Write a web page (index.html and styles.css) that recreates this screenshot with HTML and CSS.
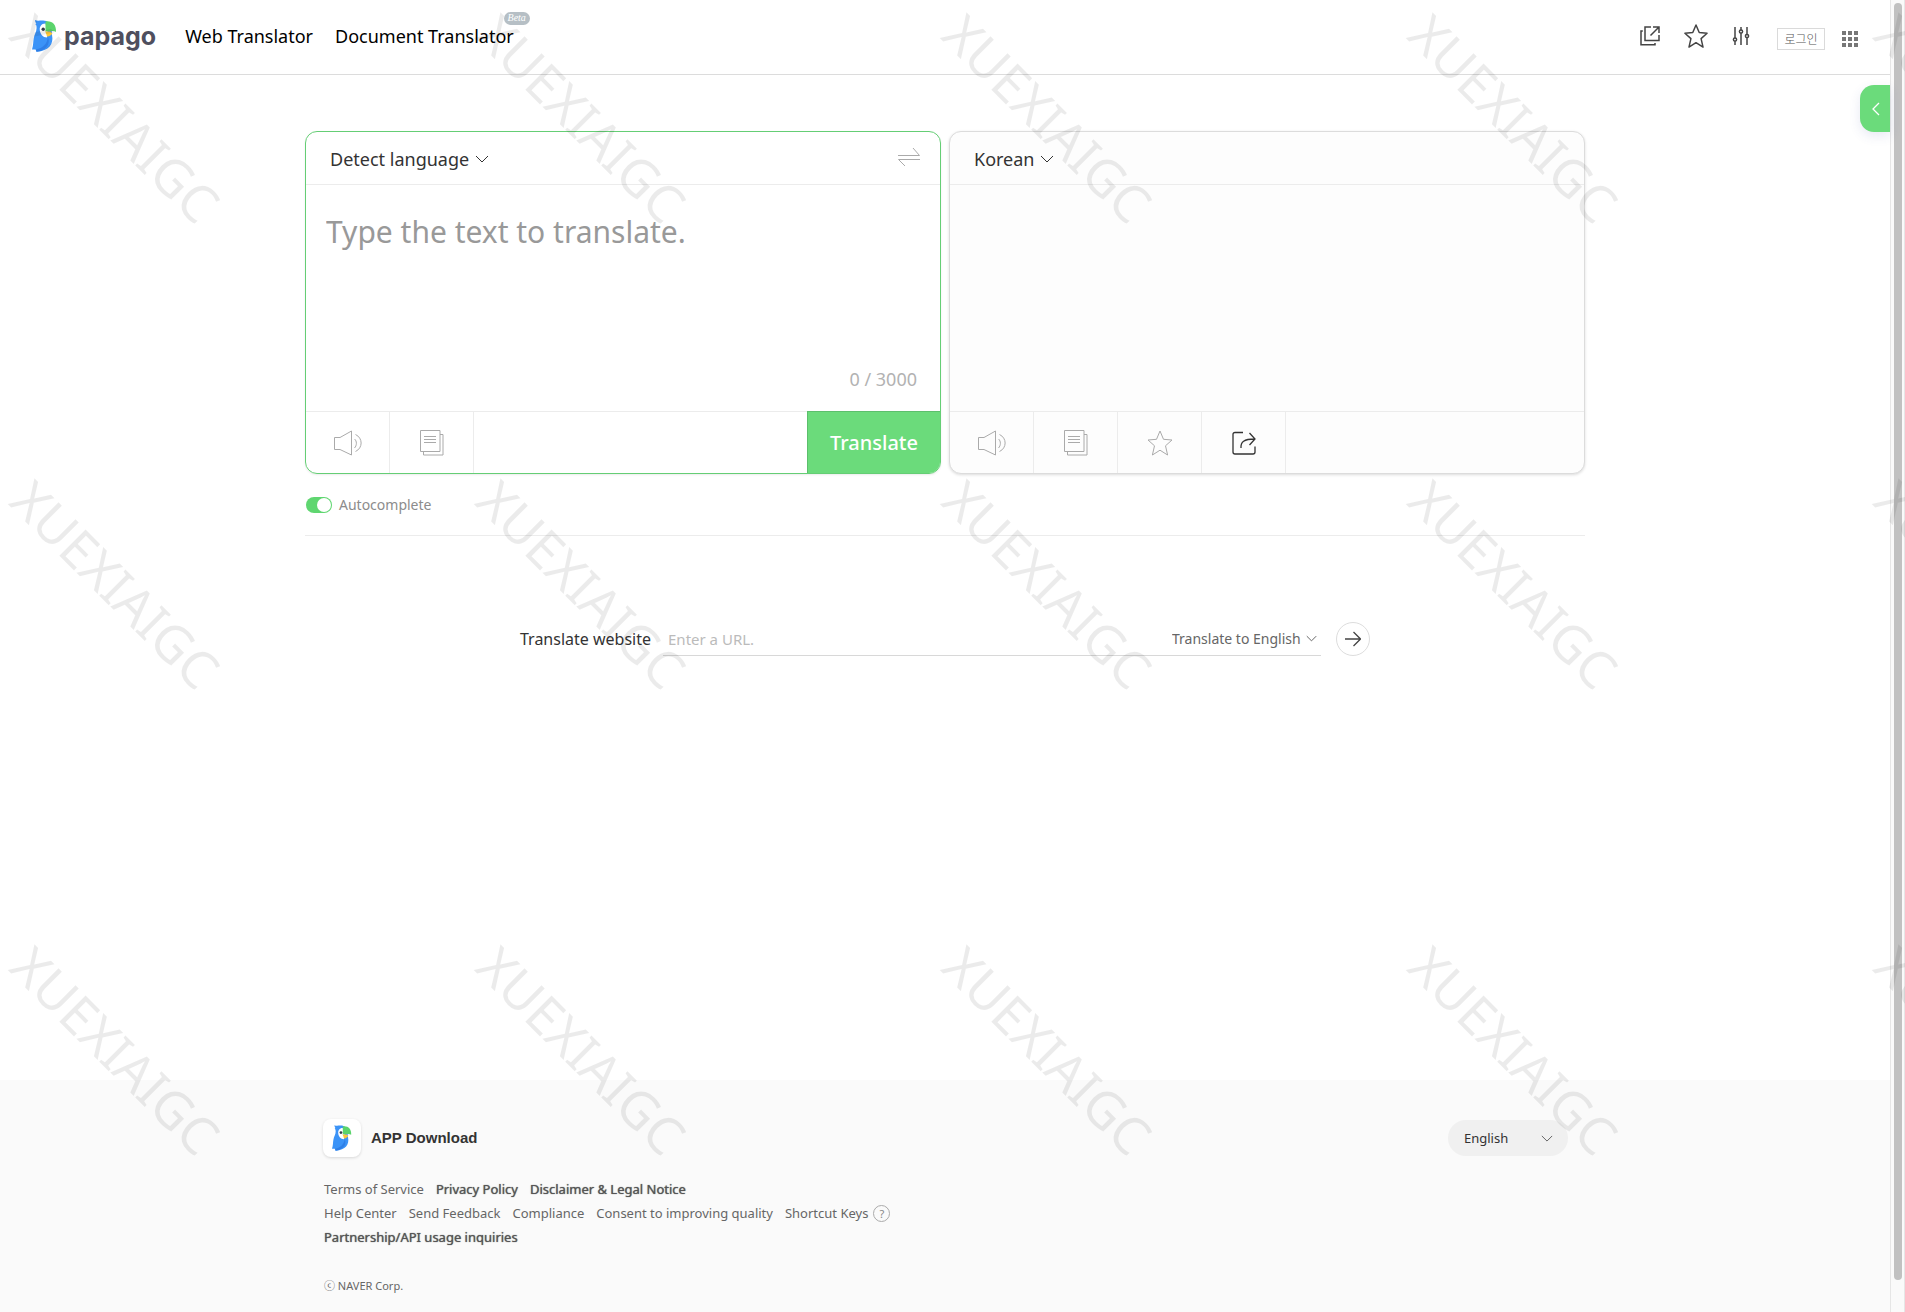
FILE: index.html
```html
<!DOCTYPE html>
<html lang="en">
<head>
<meta charset="utf-8">
<meta name="viewport" content="width=device-width, initial-scale=1">
<title>Papago</title>
<link rel="stylesheet" href="styles.css">
</head>
<body>
<svg class="defs" aria-hidden="true">
  <symbol id="parrot" viewBox="0 0 25 32">
    <path fill="#3b93f7" d="M3 0C5 1 7 .6 10 .5C15 0 19 3 19.500 9L20 15C22 24 17 31 4.500 31.800L3.500 29.500L0 29.500C1.500 25 1 22 1.800 18C2.500 14 4.500 12 4.600 8C4.700 5 3.600 4.500 3.300 4L4.400 3.500C3.400 2.500 3.200 1.500 3 0Z"/>
    <path fill="#2f7fe6" d="M4 29.500C11 28 15 24 16 17C19 25 13 31 4.500 31.800Z"/>
    <path fill="#fff" d="M13.500 3.500C9 3.500 7.500 7 7.800 10C8.100 14 11 17.500 15 17.500L15.500 11.500Z"/>
    <path fill="#5bd46c" d="M13.500 1.500C20 .5 24.500 4.500 24 12C21.500 10.500 18 11.300 13.500 11.500Z"/>
    <path fill="#fcc83a" d="M13.200 11.500H18.500C19 12.500 20 13 20.500 13C19.500 15.500 17 16.800 15 16.500C14.500 14.500 13.800 13 13.200 11.500Z"/>
    <circle cx="11.200" cy="9.200" r="1.700" fill="#343b4a"/>
  </symbol>
  <symbol id="chevron" viewBox="0 0 14 8"><path d="M1 1L7 7L13 1" fill="none" stroke="currentColor" vector-effect="non-scaling-stroke"/></symbol>
  <symbol id="speaker" viewBox="0 0 28 26">
    <path d="M.5 7.500H6L17.500 1V25L6 19.500H.5ZM20.500 9C23 11 23 15.500 20.500 18M21.500 4.500C29 8 29 18 21.500 21.500" fill="none" stroke="currentColor"/>
  </symbol>
  <symbol id="copy" viewBox="0 0 24 26">
    <path d="M.5.5H20V21.500H.5ZM20 4.500H23V25H3.500V21.500M4 6.500H16M4 9.500H16M4 12.500H16" fill="none" stroke="currentColor"/>
  </symbol>
  <symbol id="star" viewBox="0 0 26 26">
    <path d="M13 1L16.500 9.300L25 10L18.500 15.800L20.600 25L13 20.200L5.400 25L7.500 15.800L1 10L9.500 9.300Z" fill="none" stroke="currentColor" stroke-linejoin="round"/>
  </symbol>
</svg>

<div class="page">
  <header class="header">
    <a class="logo" href="#"><svg class="logo-bird" aria-hidden="true"><use href="#parrot"/></svg><span>papago</span></a>
    <nav class="nav">
      <a href="#">Web Translator</a>
      <a class="nav-document" href="#">Document Translator<span class="beta">Beta</span></a>
    </nav>
    <div class="tools">
      <button class="tool" aria-label="Open mini window"><svg width="20" height="20" viewBox="0 0 20 20" fill="none" stroke="currentColor" stroke-width="1.500"><path d="M11 1H5V14.500H19V9M13 1H19V7M19 1L10.500 9.500M2.800 5H1V18.800H15V17"/></svg></button>
      <button class="tool tool-star" aria-label="Favorites"><svg width="24" height="24" stroke-width="1.600"><use href="#star"/></svg></button>
      <button class="tool" aria-label="Settings"><svg width="18" height="20" viewBox="0 0 18 20" fill="none" stroke="currentColor" stroke-width="1.500"><path d="M3 1V12M3 15V19M9 1V4M9 7V19M15 1V8.500M15 11.500V19"/><circle cx="3" cy="13.500" r="1.600"/><circle cx="9" cy="5.500" r="1.600"/><circle cx="15" cy="10" r="1.600"/></svg></button>
    </div>
    <button class="login">로그인</button>
    <button class="tool apps" aria-label="NAVER services"><svg width="16" height="16" viewBox="0 0 16 16" fill="currentColor"><path d="M0 0h4v4H0zM6 0h4v4H6zM12 0h4v4h-4zM0 6h4v4H0zM6 6h4v4H6zM12 6h4v4h-4zM0 12h4v4H0zM6 12h4v4H6zM12 12h4v4h-4z"/></svg></button>
  </header>

  <main class="main">
    <button class="side-tab" aria-label="Open side panel"><svg width="8" height="14" viewBox="0 0 8 14" fill="none" stroke="currentColor" stroke-width="1.300"><path d="M7 1L1 7L7 13"/></svg></button>
    <div class="panels">
      <section class="panel panel-source">
        <div class="panel-head">
          <span class="picker"><select aria-label="Source language"><option>Detect language</option></select><svg aria-hidden="true"><use href="#chevron"/></svg></span>
          <button class="swap" aria-label="Swap languages"><svg width="22" height="20" viewBox="0 0 22 20" fill="none" stroke="currentColor"><path d="M0 8.500H21.500L15 1M22 12.500H.5L7 19"/></svg></button>
        </div>
        <div class="panel-body">
          <textarea class="source-text" aria-label="Source text" placeholder="Type the text to translate."></textarea>
          <p class="counter">0 / 3000</p>
        </div>
        <div class="panel-foot">
          <button class="cell" aria-label="Listen"><svg width="28" height="26"><use href="#speaker"/></svg></button>
          <button class="cell" aria-label="Copy"><svg width="24" height="26"><use href="#copy"/></svg></button>
          <button class="translate">Translate</button>
        </div>
      </section>
      <section class="panel panel-target">
        <div class="panel-head">
          <span class="picker"><select aria-label="Target language"><option>Korean</option></select><svg aria-hidden="true"><use href="#chevron"/></svg></span>
        </div>
        <div class="panel-body"></div>
        <div class="panel-foot">
          <button class="cell" aria-label="Listen"><svg width="28" height="26"><use href="#speaker"/></svg></button>
          <button class="cell" aria-label="Copy"><svg width="24" height="26"><use href="#copy"/></svg></button>
          <button class="cell" aria-label="Save"><svg width="26" height="26"><use href="#star"/></svg></button>
          <button class="cell cell-active" aria-label="Share"><svg width="24" height="24" viewBox="0 0 24 24" fill="none" stroke="currentColor" stroke-width="1.300"><path d="M11 1.500H3Q1 1.500 1 3.500V21Q1 23 3 23H21Q23 23 23 21V15.500M9 17C8.500 11 12 8 22.500 8M17.500 2L23 8L17.500 14"/></svg></button>
        </div>
      </section>
    </div>
    <div class="options">
      <label class="auto"><input class="toggle" type="checkbox" checked>Autocomplete</label>
    </div>
    <form class="website">
      <label for="url">Translate website</label>
      <div class="website-field">
        <input id="url" type="text" placeholder="Enter a URL.">
        <span class="picker picker-small"><select aria-label="Website language"><option>Translate to English</option></select><svg aria-hidden="true"><use href="#chevron"/></svg></span>
      </div>
      <button class="go" type="button" aria-label="Translate website"><svg width="16" height="16" viewBox="0 0 16 16" fill="none" stroke="currentColor" stroke-width="1.300"><path d="M0 8H15M8.500 1L15.500 8L8.500 15"/></svg></button>
    </form>
  </main>

  <footer class="footer">
    <div class="footer-inner">
      <div class="footer-top">
        <a class="app" href="#"><span class="app-icon"><svg aria-hidden="true"><use href="#parrot"/></svg></span>APP Download</a>
        <span class="picker picker-pill"><select aria-label="Site language"><option>English</option></select><svg aria-hidden="true"><use href="#chevron"/></svg></span>
      </div>
      <ul class="links">
        <li><a href="#">Terms of Service</a></li>
        <li><a class="strong" href="#">Privacy Policy</a></li>
        <li><a class="strong" href="#">Disclaimer &amp; Legal Notice</a></li>
      </ul>
      <ul class="links">
        <li><a href="#">Help Center</a></li>
        <li><a href="#">Send Feedback</a></li>
        <li><a href="#">Compliance</a></li>
        <li><a href="#">Consent to improving quality</a></li>
        <li><a class="keys" href="#">Shortcut Keys<span class="help">?</span></a></li>
      </ul>
      <ul class="links">
        <li><a class="strong" href="#">Partnership/API usage inquiries</a></li>
      </ul>
      <p class="copyright">ⓒ NAVER Corp.</p>
    </div>
  </footer>
</div>

<div class="scrollbar" aria-hidden="true"><div class="scrollbar-thumb"></div></div>

<div class="watermark" aria-hidden="true">
  <span>XUEXIAIGC</span><span>XUEXIAIGC</span><span>XUEXIAIGC</span><span>XUEXIAIGC</span><span>XUEXIAIGC</span>
  <span>XUEXIAIGC</span><span>XUEXIAIGC</span><span>XUEXIAIGC</span><span>XUEXIAIGC</span><span>XUEXIAIGC</span>
  <span>XUEXIAIGC</span><span>XUEXIAIGC</span><span>XUEXIAIGC</span><span>XUEXIAIGC</span><span>XUEXIAIGC</span>
</div>
</body>
</html>
```
FILE: styles.css
```css
* { box-sizing: border-box; }

body {
  margin: 0;
  min-height: 100vh;
  display: flex;
  background: #fff;
  color: #333;
  font-family: "Noto Sans", "Noto Sans CJK KR", sans-serif;
  font-size: 14px;
}

a { color: inherit; text-decoration: none; }
p, ul { margin: 0; padding: 0; }
ul { list-style: none; }
svg { display: block; flex: none; }
button, select, input, textarea { font: inherit; color: inherit; border: 0; padding: 0; margin: 0; background: none; outline: 0; }
button { cursor: pointer; }
.defs { position: absolute; width: 0; height: 0; }

.page { flex: 1; min-width: 0; display: flex; flex-direction: column; }

/* Header */
.header {
  height: 75px;
  display: flex;
  align-items: center;
  padding: 0 32px 2px;
  border-bottom: 1px solid #dcdcdc;
}
.logo {
  display: flex;
  align-items: center;
  gap: 7px;
  color: #4f4f5e;
  font: 700 25px/32px Inter, sans-serif;
}
.logo-bird { width: 25px; height: 32px; }
.nav { display: flex; gap: 22px; margin-left: 29px; color: #000; font-size: 18px; line-height: 24px; }
.nav-document { position: relative; }
.beta {
  position: absolute;
  top: -12px;
  right: -16px;
  width: 26px;
  height: 13px;
  border-radius: 7px;
  background: #b6bfc5;
  color: #fff;
  font: italic 10px/12px "Liberation Serif", serif;
  text-align: center;
}
.tools { display: flex; align-items: center; gap: 24px; margin-left: auto; color: #444; }
.login {
  width: 48px;
  height: 22px;
  margin: 5px 17px 0 27px;
  border: 1px solid #dadada;
  color: #555;
  font: 300 12px/18px "Noto Sans CJK KR", sans-serif;
}
.apps { color: #777; margin-top: 5px; }

/* Translator */
.main { position: relative; flex: 1; padding: 56px 24px 0; }
.side-tab {
  position: absolute;
  top: 10px;
  right: 0;
  width: 30px;
  height: 47px;
  padding-left: 2px;
  display: grid;
  place-items: center;
  border-radius: 14px 0 0 14px;
  background: #6bdb7b;
  color: #fff;
  box-shadow: 0 4px 12px rgba(60, 70, 160, .12);
}
.panels, .options { max-width: 1280px; margin: 0 auto; }
.panels { display: flex; gap: 8px; }
.panel {
  flex: 1;
  min-width: 0;
  display: flex;
  flex-direction: column;
  border: 1px solid #dcdcdc;
  border-radius: 12px;
  overflow: hidden;
}
.panel-source { border-color: #65ce75; box-shadow: 0 1px 2px rgba(0, 0, 0, .08); }
.panel-target { background: #fdfdfd; box-shadow: 0 1px 3px rgba(0, 0, 0, .14); }
.panel-head {
  height: 53px;
  display: flex;
  align-items: center;
  justify-content: space-between;
  padding: 2px 20px 0 24px;
  border-bottom: 1px solid #ececec;
}
.picker { display: inline-grid; align-items: center; }
.picker > * { grid-area: 1 / 1; }
.picker select { appearance: none; padding-right: 19px; font-size: 18px; line-height: 26px; cursor: pointer; }
.picker svg { justify-self: end; width: 14px; height: 8px; pointer-events: none; }
.swap { color: #aaa; padding-bottom: 4px; }
.panel-body { height: 226px; display: flex; flex-direction: column; padding: 26px 23px 18px 20px; }
.source-text { flex: 1; width: 100%; resize: none; font-size: 30px; line-height: 42px; }
.source-text::placeholder { color: #999; opacity: 1; }
.counter { text-align: right; font-size: 18px; line-height: 28px; color: #b2b2b2; }
.panel-foot { height: 62px; display: flex; border-top: 1px solid #ececec; }
.cell { width: 84px; display: grid; place-items: center; border-right: 1px solid #ececec; color: #aaa; }
.cell-active { color: #333; }
.translate {
  width: 134px;
  margin: -1px -1px -1px auto;
  border: 1px solid #5cbf6c;
  background: #6bdb7b;
  color: #fff;
  font-size: 20px;
  font-weight: 500;
}

.options { padding: 20px 0 20px 1px; border-bottom: 1px solid #ececec; }
.auto { display: flex; align-items: center; gap: 7px; line-height: 21px; color: #8c8c8c; }
.toggle {
  appearance: none;
  display: flex;
  justify-content: flex-end;
  width: 26px;
  height: 16px;
  padding: 1px;
  border-radius: 8px;
  background: #5fd670;
}
.toggle::before { content: ""; width: 14px; height: 14px; border-radius: 7px; background: #fff; }
.toggle:not(:checked) { justify-content: flex-start; background: #ccc; }

/* Website translation */
.website { max-width: 850px; margin: 86px auto 0; display: flex; align-items: center; font-size: 16px; }
.website-field { flex: 1; display: flex; align-items: center; height: 34px; margin: 0 15px 0 12px; padding: 0 4px 0 5px; border-bottom: 1px solid #d8d8d8; }
.website-field input { flex: 1; min-width: 0; font-size: 15px; }
.website-field input::placeholder { color: #bbb; opacity: 1; }
.picker-small { color: #666; }
.picker-small select { font-size: 14px; padding-right: 16px; }
.picker-small svg { width: 11px; height: 7px; }
.go { width: 34px; height: 34px; display: grid; place-items: center; border: 1px solid #ddd; border-radius: 50%; color: #444; }

/* Footer */
.footer { background: #fafafa; padding: 39px 24px 17px; }
.footer-inner { max-width: 1246px; margin: 0 auto; padding-left: 1px; }
.footer-top { display: flex; align-items: center; justify-content: space-between; margin-bottom: 20px; }
.app { display: flex; align-items: center; gap: 10px; font: 700 15px/20px "Liberation Sans", sans-serif; }
.app-icon { width: 38px; height: 38px; display: grid; place-items: center; border-radius: 8px; background: #fff; box-shadow: 0 1px 3px rgba(0, 0, 0, .14); }
.app-icon svg { width: 20px; height: 26px; }
.picker-pill select { width: 120px; height: 36px; padding: 0 16px; border-radius: 18px; background: #f0f0f0; font-size: 13px; }
.picker-pill svg { width: 12px; height: 7px; margin-right: 15px; color: #666; }
.links, .copyright { padding-left: 1px; }
.links { display: flex; gap: 12px; font-size: 13px; line-height: 24px; color: #666; }
.strong { color: #555; text-shadow: 0 0 1px currentColor; }
.keys { display: flex; align-items: center; gap: 5px; }
.help { width: 17px; height: 17px; border: 1px solid #aaa; border-radius: 50%; font-size: 11px; line-height: 15px; text-align: center; color: #888; }
.copyright { margin-top: 28px; font-size: 11px; line-height: 18px; color: #666; }

/* Page scrollbar */
.scrollbar { width: 15px; display: flex; padding: 3px 2px 32px 3px; background: #fafafa; border: solid #e6e6e6; border-width: 0 1px; }
.scrollbar-thumb { flex: 1; border-radius: 4px; background: #c1c1c1; }

/* Repeating watermark */
.watermark {
  position: fixed;
  inset: 0;
  display: grid;
  grid-template-columns: repeat(5, 466px);
  grid-auto-rows: 466px;
  overflow: hidden;
  pointer-events: none;
  color: rgba(0, 0, 0, .08);
  font-size: 52px;
  line-height: 58px;
}
.watermark span { width: 232px; height: 236px; display: grid; place-content: center; transform: rotate(45deg); }
```
